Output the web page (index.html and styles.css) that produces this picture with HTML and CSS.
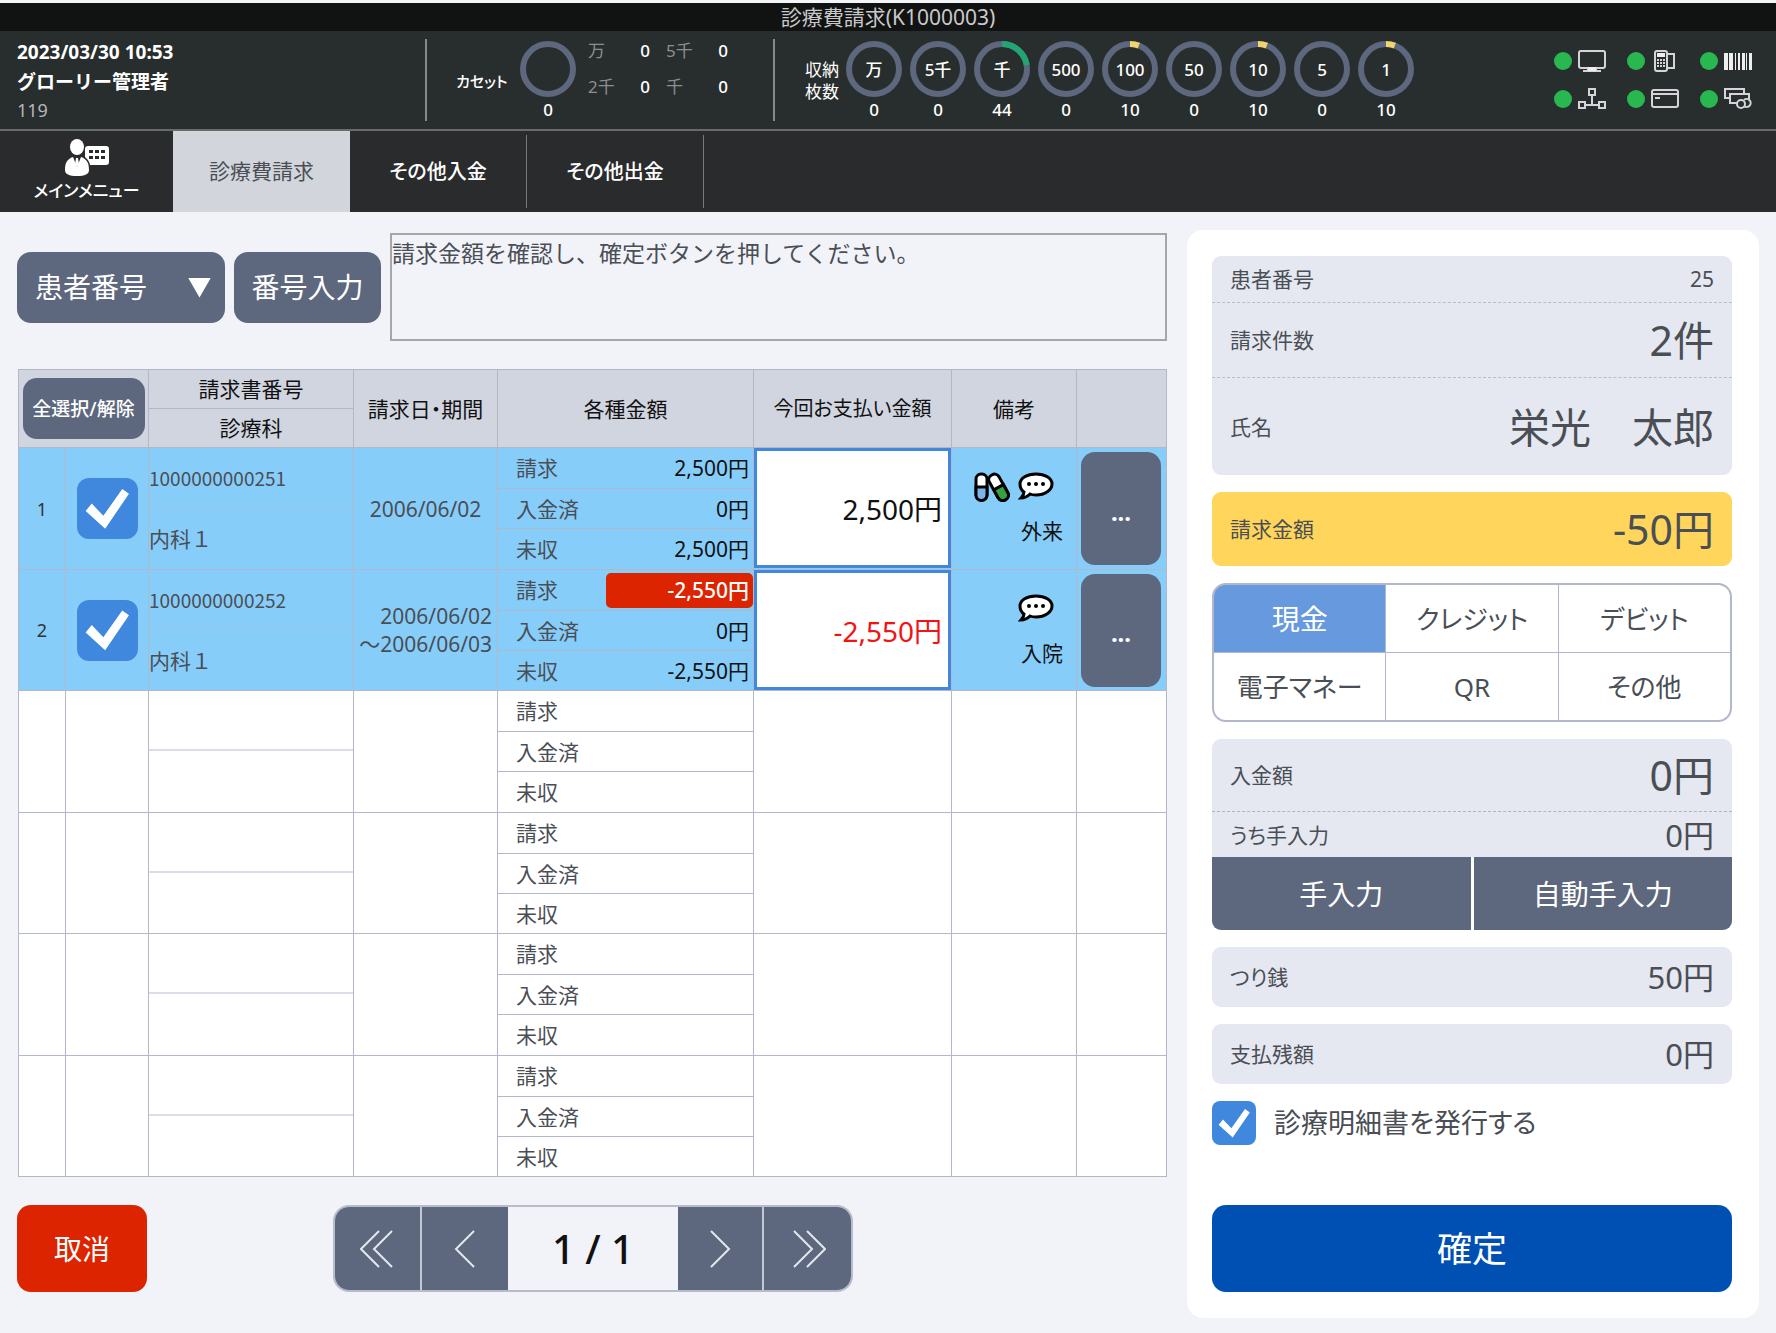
FILE: index.html
```html
<!DOCTYPE html>
<html lang="ja">
<head>
<meta charset="utf-8">
<meta name="viewport" content="width=device-width, initial-scale=1">
<title>診療費請求(K1000003)</title>
<link rel="stylesheet" href="styles.css">
</head>
<body>
<h1 class="titlebar">診療費請求(K1000003)</h1>

<header class="status">
  <div class="user">
    <strong>2023/03/30 10:53</strong>
    <strong>グローリー管理者</strong>
    <span class="user-id">119</span>
  </div>
  <section class="cassette">
    <span class="status-label">カセット</span>
    <div class="meter">
      <div class="ring"><svg viewBox="0 0 56 56"><circle class="track" cx="28" cy="28" r="25"/></svg></div>
      <span>0</span>
    </div>
    <dl class="notes">
      <dt>万</dt><dd>0</dd><dt>5千</dt><dd>0</dd>
      <dt>2千</dt><dd>0</dd><dt>千</dt><dd>0</dd>
    </dl>
  </section>
  <section class="storage">
    <span class="status-label">収納<br>枚数</span>
    <div class="meters">
      <div class="meter"><div class="ring"><svg viewBox="0 0 56 56"><circle class="track" cx="28" cy="28" r="25"/></svg><span>万</span></div><span>0</span></div>
      <div class="meter"><div class="ring"><svg viewBox="0 0 56 56"><circle class="track" cx="28" cy="28" r="25"/></svg><span>5千</span></div><span>0</span></div>
      <div class="meter"><div class="ring"><svg viewBox="0 0 56 56"><circle class="track" cx="28" cy="28" r="25"/><circle class="level level-mid" cx="28" cy="28" r="25" stroke-dasharray="35 200"/></svg><span>千</span></div><span>44</span></div>
      <div class="meter"><div class="ring"><svg viewBox="0 0 56 56"><circle class="track" cx="28" cy="28" r="25"/></svg><span>500</span></div><span>0</span></div>
      <div class="meter"><div class="ring"><svg viewBox="0 0 56 56"><circle class="track" cx="28" cy="28" r="25"/><circle class="level level-low" cx="28" cy="28" r="25" stroke-dasharray="9 200"/></svg><span>100</span></div><span>10</span></div>
      <div class="meter"><div class="ring"><svg viewBox="0 0 56 56"><circle class="track" cx="28" cy="28" r="25"/></svg><span>50</span></div><span>0</span></div>
      <div class="meter"><div class="ring"><svg viewBox="0 0 56 56"><circle class="track" cx="28" cy="28" r="25"/><circle class="level level-low" cx="28" cy="28" r="25" stroke-dasharray="9 200"/></svg><span>10</span></div><span>10</span></div>
      <div class="meter"><div class="ring"><svg viewBox="0 0 56 56"><circle class="track" cx="28" cy="28" r="25"/></svg><span>5</span></div><span>0</span></div>
      <div class="meter"><div class="ring"><svg viewBox="0 0 56 56"><circle class="track" cx="28" cy="28" r="25"/><circle class="level level-low" cx="28" cy="28" r="25" stroke-dasharray="9 200"/></svg><span>1</span></div><span>10</span></div>
    </div>
  </section>
  <ul class="devices">
    <li><svg viewBox="0 0 28 24"><rect x="1" y="2" width="26" height="17" rx="2"/><path d="M5 22h18M9 20h10"/><path class="solid" d="M10 18h8v4h-8z"/></svg></li>
    <li><svg viewBox="0 0 28 24"><rect x="4" y="2" width="12" height="20" rx="2"/><path d="M16 5h7v14h-7"/><path class="solid" d="M6 4h8v4H6z"/><path d="M6 11h8M6 14h8M6 17h8" stroke-dasharray="2 1"/></svg></li>
    <li><svg viewBox="0 0 28 24"><path class="solid" d="M0 4h4v17H0zM5 4h4v17H5zM11 4h1v17h-1zM14 4h2v17h-2zM18 4h3v17h-3zM22 4h1v17h-1zM25 4h3v17h-3z"/></svg></li>
    <li><svg viewBox="0 0 28 24"><path d="M11 2h6v6h-6zM1 15h6v6H1zM21 15h6v6h-6zM14 8v10M7 18h14"/></svg></li>
    <li><svg viewBox="0 0 28 24"><rect x="1" y="3" width="26" height="17" rx="2"/><path d="M1 7h26M4 11h5"/></svg></li>
    <li><svg viewBox="0 0 28 24"><path d="M5 11H1V2h19v4M13 16H6V7h19v5"/><circle cx="17" cy="17" r="4"/><path d="M20 13a4 4 0 1 1 0 6"/></svg></li>
  </ul>
</header>

<nav class="tabs">
  <a href="#menu" class="main-menu">
    <svg viewBox="0 0 46 38"><ellipse cx="13" cy="8" rx="7" ry="8"/><path d="M9 18l4 10 4-10c6 2 8 6 8 13 0 4-4 6-12 6S1 35 1 31c0-7 2-11 8-13z"/><path d="M12 19h2l1 6-2 3-2-3z"/><path fill-rule="evenodd" d="M24 7h18q3 0 3 3v13q0 3-3 3H26q-1-5-5-8V10q0-3 3-3zM25 11v3h4v-3zm6 0v3h4v-3zm6 0v3h4v-3zM25 17v3h4v-3zm6 0v3h4v-3zm6 0v3h4v-3z"/></svg>
    メインメニュー
  </a>
  <a href="#billing" class="tab active" aria-current="page">診療費請求</a>
  <a href="#deposit" class="tab">その他入金</a>
  <a href="#payout" class="tab">その他出金</a>
</nav>

<main>
  <section class="billing">
    <div class="search">
      <div class="picker">
        <select class="slate" aria-label="検索条件"><option>患者番号</option></select>
      </div>
      <button class="slate number-entry" type="button">番号入力</button>
      <p class="message" role="status">請求金額を確認し、確定ボタンを押してください。</p>
    </div>

    <table class="bills">
      <colgroup>
        <col class="c-no"><col class="c-check"><col class="c-id"><col class="c-date"><col class="c-amounts"><col class="c-pay"><col class="c-note"><col class="c-more">
      </colgroup>
      <thead>
        <tr>
          <th colspan="2" rowspan="2"><button class="slate select-all" type="button">全選択/解除</button></th>
          <th>請求書番号</th>
          <th rowspan="2">請求日・期間</th>
          <th rowspan="2">各種金額</th>
          <th rowspan="2" class="pay-head">今回お支払い金額</th>
          <th rowspan="2">備考</th>
          <th rowspan="2"></th>
        </tr>
        <tr><th>診療科</th></tr>
      </thead>
      <tbody>
        <tr class="selected">
          <td class="no">1</td>
          <td class="pick"><input class="check" type="checkbox" checked aria-label="1を選択"></td>
          <td class="split"><div class="half bill-id">1000000000251</div><div class="half">内科１</div></td>
          <td class="date">2006/06/02</td>
          <td class="split"><dl class="amounts"><div><dt>請求</dt><dd>2,500円</dd></div><div><dt>入金済</dt><dd>0円</dd></div><div><dt>未収</dt><dd>2,500円</dd></div></dl></td>
          <td class="split"><input class="pay" type="text" value="2,500円" aria-label="今回お支払い金額"></td>
          <td class="note">
            <div class="note-icons">
              <svg class="pills" viewBox="0 0 36 30"><g stroke="#000" stroke-width="3"><rect x="2" y="2" width="11" height="26" rx="5" fill="#fff"/><path d="M2 15h11v8a5 5 0 0 1-11 0z" fill="#7db4ea"/><g transform="rotate(-29 25 15)"><rect x="19" y="1" width="11" height="28" rx="5" fill="#fff"/><path d="M19 15h11v9a5 5 0 0 1-11 0z" fill="#37a045"/></g></g></svg>
              <svg class="bubble" viewBox="0 0 36 28"><path d="M18 2c9 0 16 4 16 10s-7 11-16 11c-2 0-4 0-6-1-2 2-5 4-9 4 2-2 3-4 3-6-3-2-4-5-4-8C2 6 9 2 18 2z" fill="#fff" stroke="#000" stroke-width="3"/><circle cx="11" cy="12" r="2"/><circle cx="18" cy="12" r="2"/><circle cx="25" cy="12" r="2"/></svg>
            </div>
            外来
          </td>
          <td><button class="slate more" type="button" aria-label="詳細">...</button></td>
        </tr>
        <tr class="selected">
          <td class="no">2</td>
          <td class="pick"><input class="check" type="checkbox" checked aria-label="2を選択"></td>
          <td class="split"><div class="half bill-id">1000000000252</div><div class="half">内科１</div></td>
          <td class="date range">2006/06/02<br>～2006/06/03</td>
          <td class="split"><dl class="amounts"><div><dt>請求</dt><dd class="refund">-2,550円</dd></div><div><dt>入金済</dt><dd>0円</dd></div><div><dt>未収</dt><dd>-2,550円</dd></div></dl></td>
          <td class="split"><input class="pay negative" type="text" value="-2,550円" aria-label="今回お支払い金額"></td>
          <td class="note">
            <div class="note-icons">
              <svg class="bubble" viewBox="0 0 36 28"><path d="M18 2c9 0 16 4 16 10s-7 11-16 11c-2 0-4 0-6-1-2 2-5 4-9 4 2-2 3-4 3-6-3-2-4-5-4-8C2 6 9 2 18 2z" fill="#fff" stroke="#000" stroke-width="3"/><circle cx="11" cy="12" r="2"/><circle cx="18" cy="12" r="2"/><circle cx="25" cy="12" r="2"/></svg>
            </div>
            入院
          </td>
          <td><button class="slate more" type="button" aria-label="詳細">...</button></td>
        </tr>
        <tr><td></td><td></td><td class="split"><div class="half"></div><div class="half"></div></td><td></td><td class="split"><dl class="amounts"><div><dt>請求</dt></div><div><dt>入金済</dt></div><div><dt>未収</dt></div></dl></td><td></td><td></td><td></td></tr>
        <tr><td></td><td></td><td class="split"><div class="half"></div><div class="half"></div></td><td></td><td class="split"><dl class="amounts"><div><dt>請求</dt></div><div><dt>入金済</dt></div><div><dt>未収</dt></div></dl></td><td></td><td></td><td></td></tr>
        <tr><td></td><td></td><td class="split"><div class="half"></div><div class="half"></div></td><td></td><td class="split"><dl class="amounts"><div><dt>請求</dt></div><div><dt>入金済</dt></div><div><dt>未収</dt></div></dl></td><td></td><td></td><td></td></tr>
        <tr><td></td><td></td><td class="split"><div class="half"></div><div class="half"></div></td><td></td><td class="split"><dl class="amounts"><div><dt>請求</dt></div><div><dt>入金済</dt></div><div><dt>未収</dt></div></dl></td><td></td><td></td><td></td></tr>
      </tbody>
    </table>

    <div class="actions">
      <button class="cancel" type="button">取消</button>
      <div class="pager">
        <button type="button" aria-label="最初のページ"><svg viewBox="0 0 36 38"><path d="M19 1L1 19l18 18M32 1L14 19l18 18"/></svg></button>
        <button type="button" aria-label="前のページ"><svg viewBox="0 0 36 38"><path d="M27 1L9 19l18 18"/></svg></button>
        <span class="page">1 / 1</span>
        <button type="button" aria-label="次のページ"><svg viewBox="0 0 36 38"><path d="M9 1l18 18L9 37"/></svg></button>
        <button type="button" aria-label="最後のページ"><svg viewBox="0 0 36 38"><path d="M4 1l18 18L4 37M17 1l18 18-18 18"/></svg></button>
      </div>
    </div>
  </section>

  <aside class="panel">
    <dl class="card patient">
      <div><dt>患者番号</dt><dd class="small">25</dd></div>
      <div class="count"><dt>請求件数</dt><dd class="large">2件</dd></div>
      <div class="name"><dt>氏名</dt><dd class="large">栄光　太郎</dd></div>
    </dl>
    <dl class="card total"><div><dt>請求金額</dt><dd class="large">-50円</dd></div></dl>
    <div class="methods">
      <button type="button" class="chosen" aria-pressed="true">現金</button>
      <button type="button">クレジット</button>
      <button type="button">デビット</button>
      <button type="button">電子マネー</button>
      <button type="button">QR</button>
      <button type="button">その他</button>
    </div>
    <div class="card received">
      <dl>
        <div class="paid"><dt>入金額</dt><dd class="large">0円</dd></div>
        <div class="manual"><dt>うち手入力</dt><dd>0円</dd></div>
      </dl>
      <div class="entry">
        <button type="button">手入力</button>
        <button type="button">自動手入力</button>
      </div>
    </div>
    <dl class="card"><div><dt>つり銭</dt><dd>50円</dd></div></dl>
    <dl class="card"><div><dt>支払残額</dt><dd>0円</dd></div></dl>
    <label class="issue"><input class="check" type="checkbox" checked>診療明細書を発行する</label>
    <button class="confirm" type="button">確定</button>
  </aside>
</main>
</body>
</html>
```

FILE: styles.css
```css
:root {
  --slate: #5d677e;
  --line: #b2b7c9;
  --blue: #4088dd;
  --ink: #4a4e55;
}

* { box-sizing: border-box; }

body {
  margin: 0;
  min-height: 100vh;
  display: flex;
  flex-direction: column;
  background: #f2f3f9;
  color: var(--ink);
  font: 21px/28px "Noto Sans", "Noto Sans CJK JP", sans-serif;
  font-feature-settings: "palt";
}

button, input, select { font: inherit; font-feature-settings: inherit; color: inherit; margin: 0; }
button { border: 0; padding: 0; cursor: pointer; }
dl, dd, p, ul { margin: 0; padding: 0; }
svg { display: block; }

.titlebar {
  margin: 0;
  border-top: 3px solid #f4f5f8;
  background: #111312;
  color: #c9c9cb;
  font-size: 21px;
  font-weight: 400;
  line-height: 28px;
  text-align: center;
}

/* status header */
.status {
  display: flex;
  align-items: center;
  height: 100px;
  padding: 0 24px 0 17px;
  background: #282d2e;
  border-bottom: 2px solid #666b6c;
  color: #fff;
  font-size: 17px;
}
.user { flex: 0 0 408px; display: grid; font-size: 19px; line-height: 30px; }
.user strong { font-feature-settings: normal; }
.user-id { color: #b4b6b8; font-size: 18px; line-height: 26px; }
.cassette, .storage {
  display: flex;
  align-items: center;
  height: 82px;
  border-left: 2px solid #85898c;
}
.cassette { flex: 0 0 348px; padding-left: 29px; }
.storage { padding-left: 30px; }
.status-label { line-height: 22px; padding-top: 2px; }
.cassette .status-label { width: 64px; font-size: 15px; font-weight: 500; }
.storage .status-label { width: 41px; }
.meter { display: grid; justify-items: center; row-gap: 1px; padding-top: 2px; line-height: 24px; font-weight: 500; }
.meters { display: flex; gap: 8px; }
.ring { display: grid; place-items: center; width: 56px; height: 56px; }
.ring > * { grid-area: 1 / 1; }
.ring > span { padding-top: 3px; }
.ring svg { width: 56px; height: 56px; }
.track { fill: none; stroke: var(--slate); stroke-width: 6; }
.level { fill: none; stroke-width: 6; transform: rotate(-90deg); transform-origin: center; }
.level-mid { stroke: #22a574; }
.level-low { stroke: #f3d36b; }
.notes {
  display: grid;
  grid-template-columns: 31px 31px 47px 31px;
  row-gap: 12px;
  margin-left: 12px;
  align-self: start;
  line-height: 24px;
}
.notes dt { color: #8c8f92; }
.notes dd { text-align: right; font-weight: 500; }
.notes dt:nth-of-type(even) { padding-left: 16px; }
.devices {
  margin-left: auto;
  display: grid;
  grid-template-columns: repeat(3, auto);
  gap: 14px 21px;
  list-style: none;
}
.devices li { display: flex; align-items: center; gap: 6px; }
.devices li::before { content: ""; width: 18px; height: 18px; border-radius: 50%; background: #28b84f; }
.devices svg { width: 28px; height: 24px; fill: none; stroke: #d4d4da; stroke-width: 2; }
.devices .solid { fill: #eee; stroke: none; }

/* navigation */
.tabs { display: flex; align-items: center; height: 81px; background: #2a2b2d; }
.tabs a { color: #fff; text-decoration: none; text-align: center; }
.main-menu {
  width: 173px;
  display: grid;
  justify-items: center;
  font-size: 17px;
  font-weight: 500;
  line-height: 28px;
}
.main-menu svg { width: 46px; height: 38px; fill: #fff; }
.tab { width: 177px; border-right: 1px solid #77797b; font-size: 20px; font-weight: 500; line-height: 73px; }
.tabs .active { background: #d2d5dc; color: var(--ink); font-size: 21px; font-weight: 400; line-height: 81px; border: 0; }

/* page body */
main {
  flex: 1;
  display: grid;
  grid-template-columns: minmax(0, 1150fr) minmax(0, 572fr);
  gap: 20px;
  padding: 18px 17px 15px;
}
.billing { display: flex; flex-direction: column; gap: 28px; padding-top: 3px; }
.slate { background: var(--slate); color: #fff; border-radius: 14px; }

.search { display: flex; align-items: center; gap: 9px; font-size: 28px; }
.picker { position: relative; flex: 0 0 208px; }
.picker select { appearance: none; width: 100%; height: 71px; padding: 0 18px; border: 0; }
.picker::after {
  content: "";
  position: absolute;
  top: 26px;
  right: 14px;
  width: 23px;
  height: 20px;
  background: #fff;
  clip-path: polygon(0 0, 100% 0, 50% 100%);
  pointer-events: none;
}
.number-entry { flex: 0 0 147px; height: 71px; }
.message {
  flex: 1;
  align-self: stretch;
  min-height: 108px;
  padding: 3px 0;
  border: 2px solid #a4a6ab;
  font-size: 23px;
  font-feature-settings: normal;
  line-height: 30px;
}

/* bill list */
.bills { width: calc(100% - 2px); margin: 0 1px; table-layout: fixed; border-collapse: collapse; background: #fff; }
.c-no { width: 47px; }
.c-check { width: 83px; }
.c-id { width: 205px; }
.c-date { width: 144px; }
.c-amounts { width: 256px; }
.c-pay { width: 198px; }
.c-note { width: 125px; }
.c-more { width: 90px; }
.bills th, .bills td { padding: 0; border: 1px solid var(--line); }
.bills th { background: #d1d5e0; color: #111; font-weight: 400; }
.bills .pay-head { font-size: 20px; }
.bills .split { vertical-align: top; }
.bills thead tr { height: 39px; }
.bills tbody tr { height: 121px; }
.bills tbody tr:nth-child(odd) { height: 122px; }
.selected { background: #87cdfa; }
.select-all { width: 122px; height: 61px; font-size: 19px; font-weight: 500; }
.no { text-align: center; font-size: 18px; color: #333; }
.check {
  appearance: none;
  display: block;
  flex: none;
  width: 61px;
  height: 61px;
  border-radius: 12px;
  background: #c8cdd8;
}
.check:checked { background: var(--blue); }
.check:checked::before {
  content: "";
  display: block;
  height: 100%;
  background: #fff;
  clip-path: polygon(15% 54%, 25% 42%, 44% 62%, 75% 18%, 86% 26%, 47% 83%);
}
.pick .check { margin: 0 auto; }
.half { height: 60px; line-height: 63px; font-feature-settings: normal; }
.half:first-child { border-bottom: 2px solid #dcdee7; }
.selected .half:first-child { border-bottom: 1px solid #9cc6e8; }
.half.bill-id { font-family: "Noto Sans CJK JP", sans-serif; font-size: 19px; line-height: 60px; }
.date { text-align: center; }
.date.range { text-align: right; padding-right: 5px; }
.amounts div { display: flex; align-items: center; height: 40px; padding-left: 18px; }
.amounts div + div { border-top: 1px solid var(--line); }
.amounts dd { margin-left: auto; padding-right: 4px; color: #111; }
.amounts .refund { width: 147px; border-radius: 5px; background: #dc2400; color: #fff; font-weight: 500; line-height: 35px; text-align: right; }
.pay {
  display: block;
  width: 100%;
  height: 120px;
  padding: 0 6px;
  border: 3px solid var(--blue);
  background: #fff;
  color: #111;
  font-size: 28px;
  text-align: right;
}
.pay.negative { color: #f01414; }
.bills .note { padding-right: 13px; color: #111; text-align: right; }
.note-icons { display: flex; justify-content: flex-end; gap: 8px; height: 30px; margin: 0 9px 15px 0; }
.pills { width: 36px; height: 30px; }
.bubble { width: 36px; height: 28px; }
.more { display: block; width: 80px; height: 113px; margin-left: 4px; padding-top: 6px; font-size: 24px; font-weight: 700; }

.actions { display: flex; gap: 186px; height: 87px; }
.cancel { width: 130px; border-radius: 14px; background: #dc2400; color: #fff; font-size: 28px; }
.pager {
  display: grid;
  grid-template-columns: 87px 86px 170px 86px 87px;
  border: 2px solid #b6bcca;
  border-radius: 16px;
  overflow: hidden;
}
.pager button { display: grid; place-items: center; background: var(--slate); }
.pager button:first-child, .page + button { border-right: 2px solid #c3c8d3; }
.pager svg { width: 36px; height: 38px; fill: none; stroke: #e4e7ee; stroke-width: 2; }
.page { align-self: center; text-align: center; color: #111; font-size: 40px; font-weight: 500; line-height: 48px; }

/* payment panel */
.panel {
  display: flex;
  flex-direction: column;
  gap: 17px;
  padding: 26px 27px 26px 25px;
  border-radius: 16px;
  background: #fff;
}
.card { border-radius: 9px; background: #e5e8f0; overflow: hidden; }
.card dl > div, dl.card > div { display: flex; align-items: center; justify-content: space-between; padding: 0 18px; height: 60px; }
.card dd { font-size: 31px; line-height: 40px; }
.card dd.large { font-size: 41px; line-height: 56px; }
.card dd.small { font-size: 21px; }
dl.patient > div { height: 46px; }
dl.patient > .count { height: 76px; border: dashed #b9bdcb; border-width: 1px 0; }
dl.patient > .name { height: 97px; }
.total.card { background: #ffd65b; }
dl.total > div { height: 74px; }
.card dl > .paid { height: 73px; border-bottom: 1px dashed #b0b4c2; }
.card dl > .manual { height: 45px; }
.methods {
  display: grid;
  grid-template-columns: repeat(3, 1fr);
  gap: 1px;
  border: 2px solid var(--line);
  border-radius: 14px;
  background: var(--line);
  overflow: hidden;
}
.methods button { height: 67px; background: #fff; font-size: 26px; }
.methods .chosen { background: #6699de; color: #fff; font-size: 28px; }
.entry { display: grid; grid-template-columns: 1fr 1fr; gap: 3px; background: #fff; }
.entry button { height: 73px; background: var(--slate); color: #fff; font-size: 28px; }
.issue { display: flex; align-items: center; gap: 18px; font-size: 27px; }
.issue .check { width: 44px; height: 44px; border-radius: 8px; }
.confirm { height: 87px; margin-top: auto; border-radius: 14px; background: #0050b4; color: #fff; font-size: 35px; }
```
